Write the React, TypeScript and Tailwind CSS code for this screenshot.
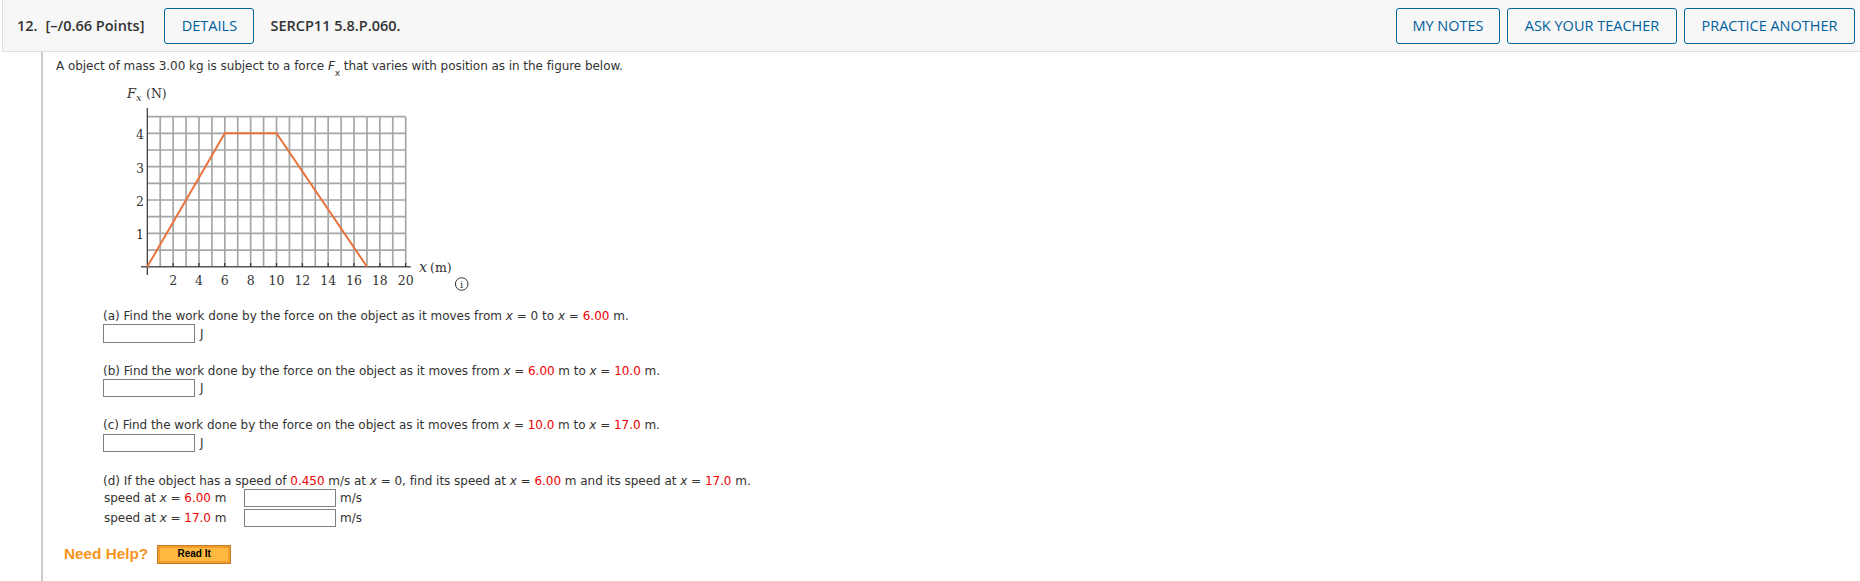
import React from "react";

const gridX = Array.from({ length: 21 }, (_, i) => 47.3 + i * 12.92);
const gridY = Array.from({ length: 10 }, (_, i) => 186.7 - i * 16.67);
const xLabels = [2, 4, 6, 8, 10, 12, 14, 16, 18, 20];

const Graph = () => (
  <svg width="400" height="220" className="block ml-[57px] mt-[5px]">
    {gridX.slice(1).map((x) => (
      <line key={x} x1={x} y1={36.7} x2={x} y2={186.7} stroke="#a6a6a6" strokeWidth="1.7" />
    ))}
    {gridY.slice(1).map((y) => (
      <line key={y} x1={47.3} y1={y} x2={305.7} y2={y} stroke="#a6a6a6" strokeWidth="1.7" />
    ))}
    <line x1="47.3" y1="28" x2="47.3" y2="195" stroke="#333" strokeWidth="1.2" />
    <line x1="41" y1="186.7" x2="310.7" y2="186.7" stroke="#555" strokeWidth="1.5" />
    {xLabels.map((n) => (
      <line key={n} x1={47.3 + n * 12.92} y1="183" x2={47.3 + n * 12.92} y2="187" stroke="#333" strokeWidth="1.2" />
    ))}
    <polyline
      points="47.3,186.7 124.8,53.3 176.5,53.3 267,186.7"
      fill="none"
      stroke="#e8733f"
      strokeWidth="2"
    />
    <g fontFamily="'DejaVu Serif', serif" fontSize="12.5" fill="#333">
      {[4, 3, 2, 1].map((n) => (
        <text key={n} x="44" y={186.7 - n * 33.33 + 6} textAnchor="end">
          {n}
        </text>
      ))}
      {xLabels.map((n) => (
        <text key={n} x={47.3 + n * 12.92} y="205" textAnchor="middle">
          {n}
        </text>
      ))}
      <text x="27" y="18" fontStyle="italic" fontSize="13">F</text>
      <text x="36" y="21" fontStyle="italic" fontSize="10">x</text>
      <text x="46" y="18">(N)</text>
      <text x="319" y="192" fontStyle="italic" fontSize="14.5">x</text>
      <text x="330" y="192">(m)</text>
    </g>
    <circle cx="361.7" cy="204" r="6.3" fill="none" stroke="#333" strokeWidth="1" />
    <text x="361.7" y="208" textAnchor="middle" fontFamily="'DejaVu Serif', serif" fontSize="10" fill="#333">
      i
    </text>
  </svg>
);

const Red = ({ children }: { children: React.ReactNode }) => (
  <span className="text-[#f00000]">{children}</span>
);

const X = () => <i>x</i>;

const Answer = ({ unit, className = "h-[18px]" }: { unit: string; className?: string }) => (
  <div className="flex items-center">
    <input type="text" className={`w-[92px] bg-white border border-[#808080] ${className}`} />
    <span className={unit === "J" ? "ml-[5px]" : "ml-[4px]"}>{unit}</span>
  </div>
);

const HeaderButton = ({ label, width }: { label: string; width: string }) => (
  <button
    type="button"
    className={`${width} h-[36px] border border-[#00669c] rounded-[3px] text-[#00609c] text-[14.5px] font-medium bg-transparent`}
  >
    {label}
  </button>
);

const App = () => {
  return (
    <div className="w-[1860px] h-[581px] bg-white overflow-hidden text-[#333] text-[12px] font-['DejaVu_Sans',Verdana,sans-serif]">
      <header className="ml-[2px] h-[52px] bg-[#f7f7f7] border-b border-l border-[#dedede] flex items-center pl-[14px] pr-[5px] font-['Open_Sans',sans-serif] text-[14.5px] font-semibold">
        <span>12.</span>
        <span className="ml-[8px]">[–/0.66 Points]</span>
        <div className="ml-[20px]">
          <HeaderButton label="DETAILS" width="w-[90px]" />
        </div>
        <span className="ml-[16px]">SERCP11 5.8.P.060.</span>
        <div className="ml-auto flex gap-[7px]">
          <HeaderButton label="MY NOTES" width="w-[104px]" />
          <HeaderButton label="ASK YOUR TEACHER" width="w-[170px]" />
          <HeaderButton label="PRACTICE ANOTHER" width="w-[171px]" />
        </div>
      </header>

      <main className="ml-[41px] h-[529px] border-l-2 border-[#cccccc]">
        <p className="pl-[13px] pt-[5px] leading-[18px] h-[23px] tracking-[-0.05px]">
          A object of mass 3.00 kg is subject to a force <i>F</i>
          <sub className="text-[9px] -bottom-[6px]">x</sub> that varies with position as in the figure below.
        </p>
        <Graph />

        <div className="pl-[60px] mt-[7px]">
          <p className="h-[17px] leading-[17px] pt-[1px]">
            (a) Find the work done by the force on the object as it moves from <X /> = 0 to <X /> ={" "}
            <Red>6.00</Red> m.
          </p>
          <Answer unit="J" className="h-[19px]" />

          <p className="h-[17px] leading-[17px] mt-[19px] pt-[1px] tracking-[-0.04px]">
            (b) Find the work done by the force on the object as it moves from <X /> = <Red>6.00</Red> m
            to <X /> = <Red>10.0</Red> m.
          </p>
          <Answer unit="J" />

          <p className="h-[17px] leading-[17px] mt-[20px] tracking-[-0.03px]">
            (c) Find the work done by the force on the object as it moves from <X /> = <Red>10.0</Red> m
            to <X /> = <Red>17.0</Red> m.
          </p>
          <Answer unit="J" />

          <p className="h-[17px] leading-[17px] mt-[20px] pt-[1px] tracking-[-0.03px]">
            (d) If the object has a speed of <Red>0.450</Red> m/s at <X /> = 0, find its speed at <X /> ={" "}
            <Red>6.00</Red> m and its speed at <X /> = <Red>17.0</Red> m.
          </p>
          <div className="flex items-center">
            <span className="w-[141px] pl-[1px] tracking-[-0.03px]">
              speed at <X /> = <Red>6.00</Red> m
            </span>
            <Answer unit="m/s" />
          </div>
          <div className="flex items-center mt-[2px]">
            <span className="w-[141px] pl-[1px] tracking-[-0.03px]">
              speed at <X /> = <Red>17.0</Red> m
            </span>
            <Answer unit="m/s" />
          </div>
        </div>

        <div className="flex items-center ml-[21px] mt-[16px] font-['Liberation_Sans',Arial,sans-serif]">
          <span className="text-[#f7941d] text-[15.3px] font-bold">Need Help?</span>
          <button
            type="button"
            className="ml-[9px] w-[74px] h-[19px] border border-[#c97a22] bg-[#ffb940] shadow-[inset_0_0_0_2px_#f29c2e] text-black text-[10px] font-bold leading-none"
          >
            Read It
          </button>
        </div>
      </main>
    </div>
  );
};

export default App;
